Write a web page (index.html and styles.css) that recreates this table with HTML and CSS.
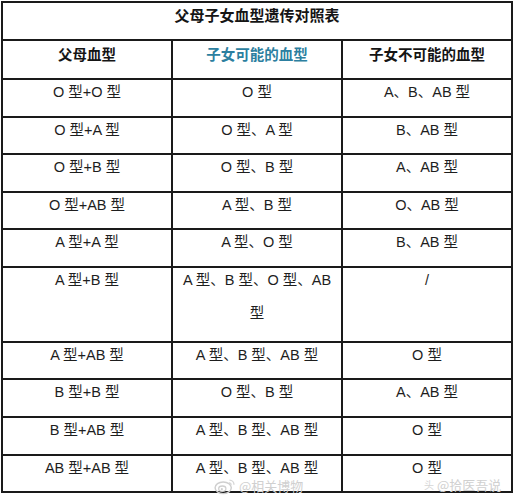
FILE: index.html
```html
<!DOCTYPE html>
<html lang="zh">
<head>
<meta charset="utf-8">
<title>父母子女血型遗传对照表</title>
<link rel="stylesheet" href="styles.css">
</head>
<body>
<div class="page">
  <div class="table">
    <div class="cell title r1">父母子女血型遗传对照表</div>

    <div class="cell head r2">父母血型</div>
    <div class="cell head blue r2">子女可能的血型</div>
    <div class="cell head r2">子女不可能的血型</div>

    <div class="cell">O 型+O 型</div>
    <div class="cell">O 型</div>
    <div class="cell">A、B、AB 型</div>

    <div class="cell">O 型+A 型</div>
    <div class="cell">O 型、A 型</div>
    <div class="cell">B、AB 型</div>

    <div class="cell">O 型+B 型</div>
    <div class="cell">O 型、B 型</div>
    <div class="cell">A、AB 型</div>

    <div class="cell">O 型+AB 型</div>
    <div class="cell">A 型、B 型</div>
    <div class="cell">O、AB 型</div>

    <div class="cell">A 型+A 型</div>
    <div class="cell">A 型、O 型</div>
    <div class="cell">B、AB 型</div>

    <div class="cell">A 型+B 型</div>
    <div class="cell wide"><span class="wrap">A 型、B 型、O 型、AB 型</span></div>
    <div class="cell">/</div>

    <div class="cell">A 型+AB 型</div>
    <div class="cell">A 型、B 型、AB 型</div>
    <div class="cell">O 型</div>

    <div class="cell">B 型+B 型</div>
    <div class="cell">O 型、B 型</div>
    <div class="cell">A、AB 型</div>

    <div class="cell">B 型+AB 型</div>
    <div class="cell">A 型、B 型、AB 型</div>
    <div class="cell">O 型</div>

    <div class="cell">AB 型+AB 型</div>
    <div class="cell">A 型、B 型、AB 型</div>
    <div class="cell">O 型</div>
  </div>

  <div class="mark mark-left">
    <svg class="weibo" viewBox="0 0 24 20" width="22" height="18" aria-hidden="true">
      <ellipse cx="10" cy="12" rx="9" ry="6.5" fill="none" stroke="#cfcfcf" stroke-width="1.6"/>
      <ellipse cx="9" cy="13" rx="4" ry="3" fill="none" stroke="#cfcfcf" stroke-width="1.4"/>
      <circle cx="8.5" cy="13.5" r="1.2" fill="#cfcfcf"/>
      <path d="M17 3.5a5 5 0 0 1 5 5" fill="none" stroke="#d6d6d6" stroke-width="1.5"/>
      <path d="M16.5 6.5a2.2 2.2 0 0 1 2.5 2.2" fill="none" stroke="#d6d6d6" stroke-width="1.3"/>
    </svg>
    <span>@相关博物</span>
  </div>
  <div class="mark mark-right">
    <span class="tt">头</span><span>@拾医吾说</span>
  </div>
</div>
</body>
</html>
```

FILE: styles.css
```css
html, body {
  margin: 0;
  padding: 0;
  background: #ffffff;
}

.page {
  position: relative;
  width: 515px;
  height: 496px;
  padding: 1px 0 0 1px;
  box-sizing: border-box;
  font-family: "Liberation Sans", "Noto Sans CJK SC", sans-serif;
  color: #1e1e1e;
}

.table {
  display: grid;
  grid-template-columns: 170px 170px 170px;
  grid-template-rows: 38px 39px 38px 37px 38px 37px 38px 75px 37px 38px 38px 37px;
  width: 512px;
  box-sizing: border-box;
  border-top: 2px solid #1a1a1a;
  border-left: 2px solid #1a1a1a;
}

.cell {
  box-sizing: border-box;
  border-right: 2px solid #1a1a1a;
  border-bottom: 2px solid #1a1a1a;
  padding: 0 6px;
  text-align: center;
  font-size: 14.5px;
  line-height: 24px;
}

.title {
  grid-column: 1 / 4;
  font-family: "Noto Sans CJK SC", sans-serif;
  font-weight: 700;
  font-size: 15px;
  line-height: 24px;
  color: #151515;
}

.head {
  font-family: "Noto Sans CJK SC", sans-serif;
  font-weight: 700;
  font-size: 14.5px;
  line-height: 26px;
  color: #151515;
}

.blue {
  color: #2c7fa0;
}

.wide {
  line-height: 33px;
}

.wrap {
  display: block;
  margin-top: -4px;
}

.mark {
  position: absolute;
  display: flex;
  align-items: center;
  gap: 3px;
  font-family: "Noto Sans CJK SC", sans-serif;
  font-size: 13px;
  color: #d0d0d0;
  line-height: 16px;
}

.mark-left {
  left: 214px;
  top: 477px;
}

.mark-right {
  left: 424px;
  top: 477px;
}

.tt {
  font-size: 10px;
  color: #d6d6d6;
}
```
